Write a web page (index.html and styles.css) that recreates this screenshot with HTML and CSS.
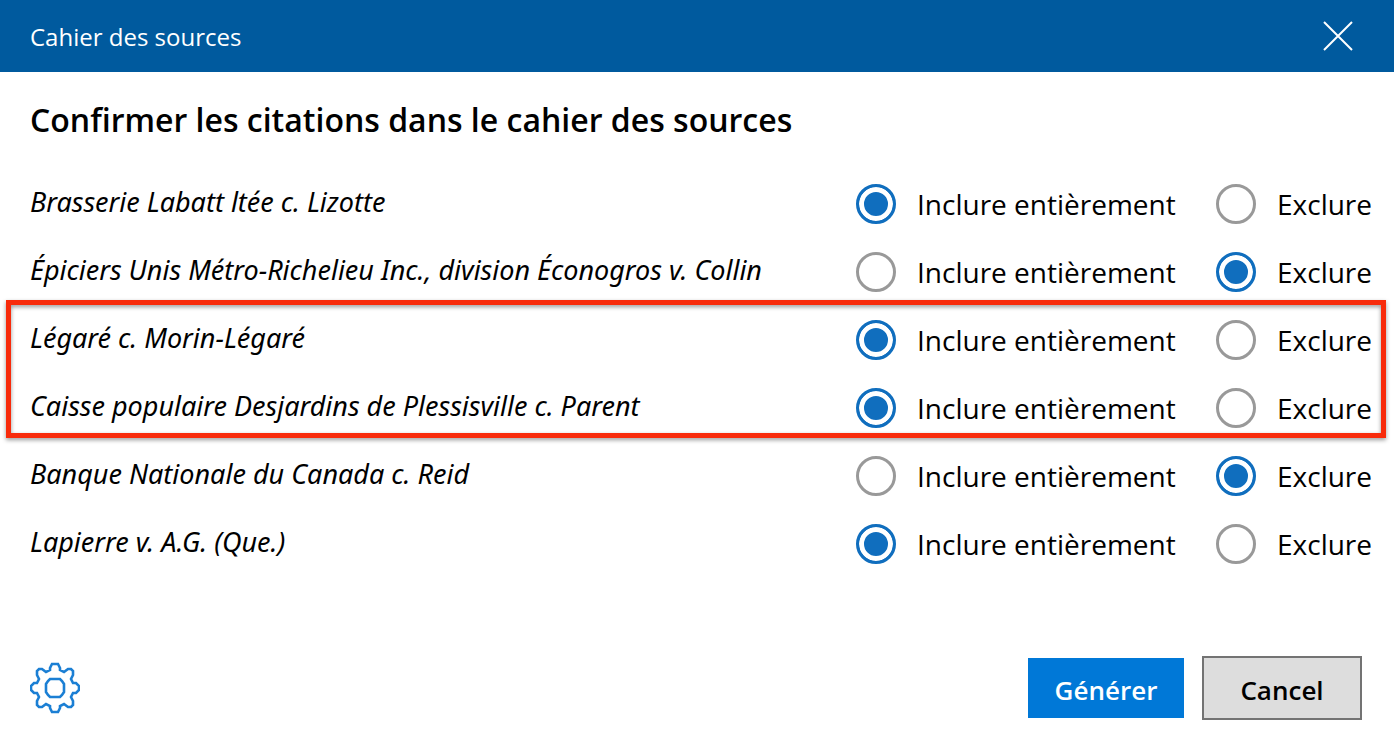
FILE: index.html
```html
<!DOCTYPE html>
<html lang="fr">

<head>
    <meta charset="UTF-8">
    <meta name="viewport" content="width=device-width, initial-scale=1">
    <title>Cahier des sources</title>
    <link rel="stylesheet" href="styles.css">
</head>

<body>

    <header class="titlebar">
        <span>Cahier des sources</span>
        <button class="close" type="button" aria-label="Fermer">
            <svg width="32" height="32" viewBox="0 0 32 32" fill="none" stroke="currentColor" stroke-width="2">
                <path d="M2 2 30 30M30 2 2 30" />
            </svg>
        </button>
    </header>

    <form class="dialog">
        <h1>Confirmer les citations dans le cahier des sources</h1>

        <div class="citations">
            <div class="row" role="radiogroup" aria-labelledby="c1">
                <span class="name" id="c1">Brasserie Labatt ltée c. Lizotte</span>
                <label class="option"><input type="radio" name="r1" checked>Inclure entièrement</label>
                <label class="option"><input type="radio" name="r1">Exclure</label>
            </div>
            <div class="row" role="radiogroup" aria-labelledby="c2">
                <span class="name" id="c2">Épiciers Unis Métro-Richelieu Inc., division Éconogros v. Collin</span>
                <label class="option"><input type="radio" name="r2">Inclure entièrement</label>
                <label class="option"><input type="radio" name="r2" checked>Exclure</label>
            </div>
            <div class="highlight">
                <div class="row" role="radiogroup" aria-labelledby="c3">
                    <span class="name" id="c3">Légaré c. Morin-Légaré</span>
                    <label class="option"><input type="radio" name="r3" checked>Inclure entièrement</label>
                    <label class="option"><input type="radio" name="r3">Exclure</label>
                </div>
                <div class="row" role="radiogroup" aria-labelledby="c4">
                    <span class="name" id="c4">Caisse populaire Desjardins de Plessisville c. Parent</span>
                    <label class="option"><input type="radio" name="r4" checked>Inclure entièrement</label>
                    <label class="option"><input type="radio" name="r4">Exclure</label>
                </div>
            </div>
            <div class="row" role="radiogroup" aria-labelledby="c5">
                <span class="name" id="c5">Banque Nationale du Canada c. Reid</span>
                <label class="option"><input type="radio" name="r5">Inclure entièrement</label>
                <label class="option"><input type="radio" name="r5" checked>Exclure</label>
            </div>
            <div class="row" role="radiogroup" aria-labelledby="c6">
                <span class="name" id="c6">Lapierre v. A.G. (Que.)</span>
                <label class="option"><input type="radio" name="r6" checked>Inclure entièrement</label>
                <label class="option"><input type="radio" name="r6">Exclure</label>
            </div>
        </div>

        <footer class="actions">
            <button class="settings" type="button" aria-label="Paramètres">
                <svg width="50" height="52" viewBox="0 0 50 52" fill="none" stroke="currentColor" stroke-width="2.6">
                    <path d="M20 6 22 2H28L30 6V8L34 10 38 7H41L43 9V13L41 17 43 21H46L49 24V28L46 31H43L41 35 43 39V43L41 45H38L34 42 30 44V46L28 50H22L20 46V44L16 42 12 45H9L7 43V39L9 35 7 31H4L1 28V24L4 21H7L9 17 7 13V9L9 7H12L16 10 20 8Z" />
                    <path d="M20 17H30L32 19 34 22V30L32 33 30 35H20L18 33 16 30V22L18 19Z" />
                </svg>
            </button>
            <button class="btn primary" type="submit">Générer</button>
            <button class="btn secondary" type="button">Cancel</button>
        </footer>
    </form>

</body>

</html>
```

FILE: styles.css
```css
* {
    box-sizing: border-box;
}

body {
    margin: 0;
    min-height: 100vh;
    display: flex;
    flex-direction: column;
    background: white;
    color: black;
    font-family: "Open Sans", "Noto Sans", sans-serif;
}

button {
    font: inherit;
    cursor: pointer;
}

svg {
    display: block;
}

.titlebar {
    display: flex;
    align-items: center;
    justify-content: space-between;
    height: 72px;
    padding: 0 40px 0 30px;
    background: #005a9e;
    color: white;
    font-size: 24px;
}

.close,
.settings {
    padding: 0;
    border: 0;
    background: none;
    color: white;
}

.dialog {
    flex: 1;
    display: flex;
    flex-direction: column;
}

h1 {
    margin: 0;
    padding: 24px 30px 26px;
    font-size: 32px;
    font-weight: 600;
    line-height: 48px;
}

.row {
    display: grid;
    grid-template-columns: 1fr 360px 178px;
    align-items: center;
    height: 68px;
    padding-left: 30px;
}

.name {
    padding-bottom: 5px;
    font-family: "Noto Sans", sans-serif;
    font-size: 27px;
    font-style: italic;
}

.option {
    display: flex;
    align-items: center;
    gap: 21px;
    font-size: 28px;
    white-space: nowrap;
}

.option input {
    appearance: none;
    flex: none;
    width: 40px;
    height: 40px;
    margin: 0;
    border: 3px solid #999;
    border-radius: 50%;
    background: white;
}

.option input:checked {
    border-color: #106ebe;
    background: #106ebe;
    box-shadow: inset 0 0 0 5px white;
}

.highlight {
    position: relative;
}

.highlight::after {
    content: "";
    position: absolute;
    inset: -6px 8px 4px 6px;
    border: 5px solid #f82b0b;
    filter: drop-shadow(0 2px 2px rgba(0, 0, 0, 0.4));
    pointer-events: none;
}

.actions {
    display: flex;
    align-items: center;
    gap: 18px;
    margin-top: auto;
    padding: 20px 32px 34px 30px;
}

.settings {
    margin-right: auto;
    color: #1b7fd4;
}

.btn {
    padding: 4px 0 0;
    border: 0;
    font-size: 26px;
    font-weight: 600;
}

.primary {
    width: 156px;
    height: 60px;
    background: #0078d7;
    color: white;
}

.secondary {
    width: 160px;
    height: 64px;
    border: 2px solid #737373;
    background: #ddd;
    color: black;
}
```
